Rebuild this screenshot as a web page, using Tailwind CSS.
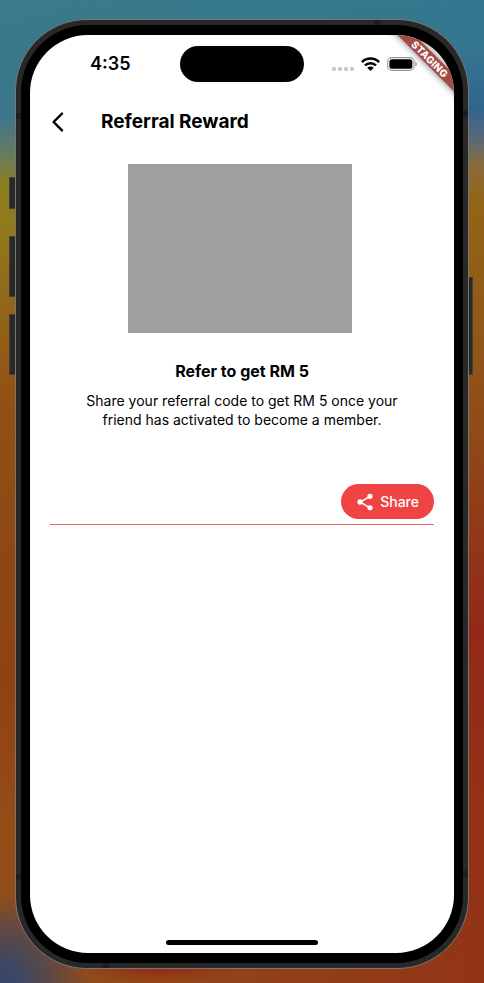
<!DOCTYPE html>
<html lang="en">
<head>
<meta charset="utf-8">
<meta name="viewport" content="width=device-width, initial-scale=1">
<title>Referral Reward</title>
<script src="https://cdn.jsdelivr.net/npm/@tailwindcss/browser@4"></script>
</head>
<body class="relative isolate flex min-h-screen flex-col overflow-x-hidden bg-[linear-gradient(to_bottom,#3b7b8a_0%,#3a7888_8%,#40758c_12%,#5f7c68_15%,#8c8020_19%,#917a1c_23%,#926419_32%,#925014_41%,#8e4614_60%,#924213_70%,#954d16_84%,#91501a_100%)] px-[15px] pt-[19px] pb-[14px] font-['Inter','Noto_Sans',sans-serif] text-black">
  <!-- Wallpaper -->
  <div class="absolute inset-0 -z-10 bg-[linear-gradient(to_bottom,#33788f_0%,#34758f_5%,#30658f_11%,#58687a_14%,#8c6a38_17%,#926416_21%,#90581a_34%,#904a18_44%,#92281a_64%,#943016_80%,#923418_100%)] mask-l-from-0% mask-l-to-100%"></div>
  <div class="absolute inset-0 -z-10 bg-[radial-gradient(circle_at_left_bottom,#364468_0px,#3d4862_22px,#5c4848_50px,#90501800_90px)]"></div>
  <div class="absolute bottom-0 left-20 -z-10 h-8 w-40 bg-[radial-gradient(ellipse_at_center,#942818_0%,#94281800_70%)]"></div>

  <div class="relative flex flex-1 flex-col rounded-[72px] border border-[#777774] bg-[#282828] p-[5px]">
    <!-- Side buttons -->
    <div class="absolute top-[157px] -left-[7px] h-8 w-1.5 border border-r-0 border-[#444038] bg-[#282828]"></div>
    <div class="absolute top-[216px] -left-[7px] h-[61px] w-1.5 border border-r-0 border-[#444038] bg-[#282828]"></div>
    <div class="absolute top-[294px] -left-[7px] h-[61px] w-1.5 border border-r-0 border-[#444038] bg-[#282828]"></div>
    <div class="absolute top-[257px] -right-[5px] h-[98px] w-1 border border-l-0 border-[#444038] bg-[#282828]"></div>
    <!-- Antenna bands -->
    <div class="absolute top-[93px] left-0 h-1.5 w-[5px] bg-[#1c1c1c]"></div>
    <div class="absolute top-[91px] right-0 h-1.5 w-[5px] bg-[#1c1c1c]"></div>
    <div class="absolute bottom-[88px] left-0 h-1.5 w-[5px] bg-[#1c1c1c]"></div>
    <div class="absolute right-0 bottom-[91px] h-1.5 w-[5px] bg-[#1c1c1c]"></div>
    <div class="absolute top-0 right-[88px] h-[5px] w-1.5 bg-[#1c1c1c]"></div>
    <div class="absolute bottom-0 left-[87px] h-[5px] w-1.5 bg-[#1c1c1c]"></div>

    <div class="flex flex-1 flex-col rounded-[67px] bg-black px-[9px] py-[10px]">
      <div class="relative flex flex-1 flex-col overflow-hidden rounded-[58px] bg-white">
        <!-- Status bar -->
        <div class="grid grid-cols-[1fr_auto_1fr] items-start pt-[11px]">
          <time class="mt-1 pl-[60px] text-lg leading-7 font-semibold">4:35</time>
          <div class="h-9 w-[124px] rounded-full bg-black"></div>
          <div class="mt-[11px] flex items-center justify-end gap-[7px] pr-9">
            <svg class="mt-2.5 h-1 w-[22px] shrink-0" viewBox="0 0 22 4" fill="#c8c8c8" aria-hidden="true"><rect width="4" height="4" rx="1.4"/><rect x="6" width="4" height="4" rx="1.4"/><rect x="12" width="4" height="4" rx="1.4"/><rect x="18" width="4" height="4" rx="1.4"/></svg>
            <svg class="h-[14px] w-[19px] shrink-0" viewBox="0 0 19 14" fill="none" stroke="#000" stroke-width="2.5" aria-hidden="true"><path d="M.9 5.1a12.2 12.2 0 0 1 17.2 0"/><path d="M4 8.4a7.8 7.8 0 0 1 11 0"/><path stroke="none" fill="#000" d="M6.2 10.8a4.7 4.7 0 0 1 6.6 0L9.5 14z"/></svg>
            <svg class="h-[14px] w-[31px] shrink-0" viewBox="0 0 31 14" aria-hidden="true"><rect x=".7" y=".6" width="26.4" height="12.8" rx="4" fill="none" stroke="#999" stroke-width="1.1"/><rect x="2.4" y="2.2" width="23" height="9.6" rx="2.6"/><path d="M28.3 4.8c2 .5 2 4 0 4.5z" fill="#999"/></svg>
          </div>
        </div>

        <div class="absolute -top-6 -right-6 flex size-24 items-center justify-center">
          <div class="flex h-3 w-32 shrink-0 rotate-45 items-center justify-center bg-[#a54b46] text-[10px] leading-3 font-extrabold tracking-wide text-white shadow-[0_0_7px_rgba(0,0,0,0.55)]">STAGING</div>
        </div>

        <!-- App bar -->
        <header class="mt-3 flex h-14 items-center gap-[31px] pl-4">
          <button type="button" aria-label="Back" class="flex h-10 w-6 items-center justify-center">
            <svg class="h-5 w-3" viewBox="0 0 12 20" fill="none" stroke="#000" stroke-width="2.4" stroke-linecap="round" stroke-linejoin="round" aria-hidden="true"><path d="M10 1.6 1.6 10l8.4 8.4"/></svg>
          </button>
          <h1 class="text-[19px] leading-6 font-bold">Referral Reward</h1>
        </header>

        <main class="flex flex-1 flex-col px-5 pt-3.5">
          <div class="mr-1 h-[169px] w-56 self-center bg-[#a0a0a0]"></div>
          <h2 class="mt-7 text-center text-base leading-5 font-bold">Refer to get RM 5</h2>
          <p class="mx-auto mt-2.5 max-w-80 text-center text-[14px] leading-[19px]">Share your referral code to get RM 5 once your<br>friend has activated to become a member.</p>
          <div class="mt-[55px] flex justify-end border-b border-[#ef5f68] pb-[5px]">
            <button type="button" class="flex h-[35px] items-center gap-1.5 rounded-full bg-[#f04444] px-[15px] text-sm font-medium text-white">
              <svg class="size-[18px]" viewBox="0 0 18 18" fill="#fff" stroke="#fff" stroke-width="1.5" aria-hidden="true"><path fill="none" d="M14 3.5 4 9l10 5.8"/><circle cx="14" cy="3.3" r="1.9"/><circle cx="4" cy="9" r="1.9"/><circle cx="14" cy="14.8" r="1.9"/></svg>
              Share
            </button>
          </div>
        </main>

        <div class="mb-2 h-[5px] w-[152px] self-center rounded-full bg-black"></div>
      </div>
    </div>
  </div>
</body>
</html>
